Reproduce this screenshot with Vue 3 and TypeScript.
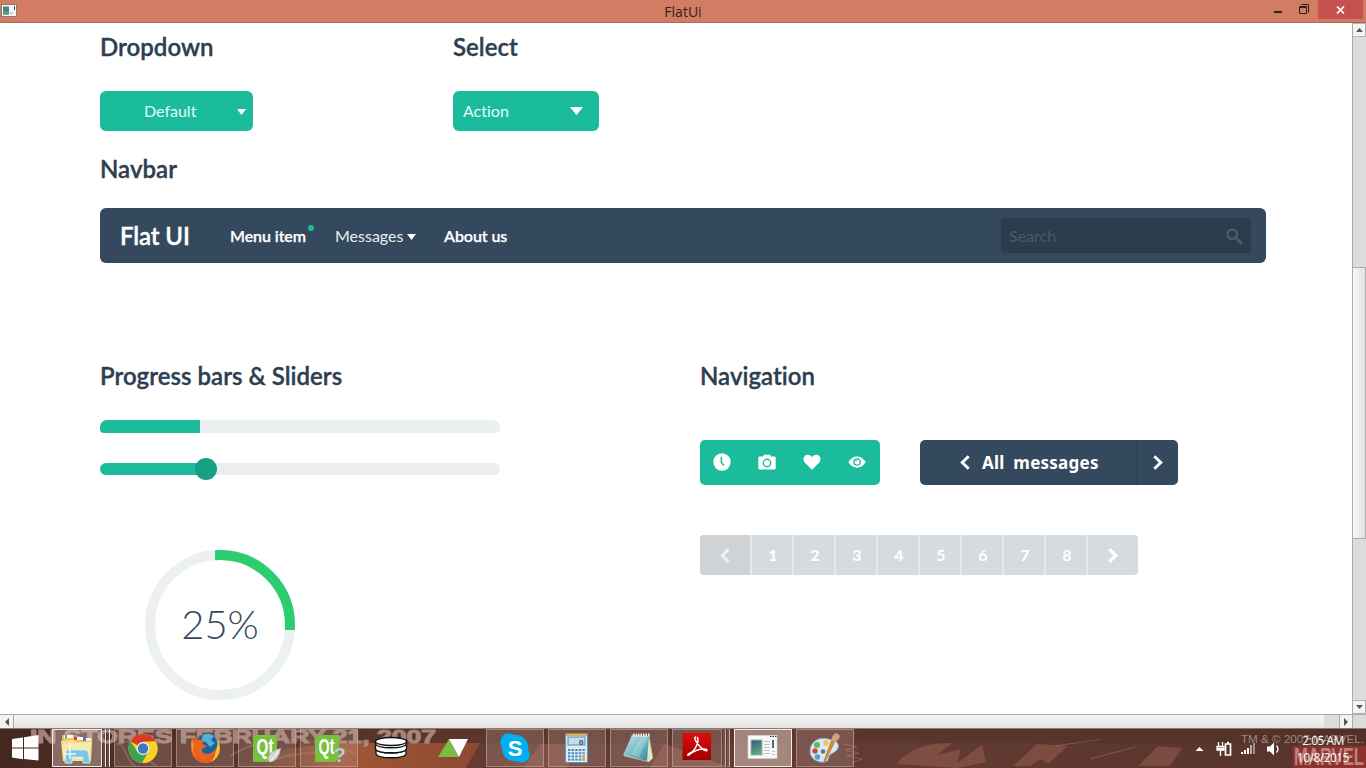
<script setup lang="ts">
import { ref } from 'vue'

const progress = ref<number>(25)
const slider = ref<number>(26.5)
const pages: number[] = [1, 2, 3, 4, 5, 6, 7, 8]
const search = ref<string>('')
const keyColumns: number[] = [0, 1, 2, 3, 4]
const keyRows: number[] = [0, 1, 2, 3]
</script>

<template>
  <div class="window">
    <header class="titlebar">
      <svg class="app-icon" width="16" height="14" viewBox="0 0 16 14">
        <rect x="0.5" y="0.5" width="15" height="12" fill="#f5f7f6" stroke="#8d7770" />
        <rect x="2" y="2.500" width="6" height="8" fill="#3f8790" />
        <path d="M2 10.500V6l6 2v2.500z" fill="#4fa06a" />
        <rect x="9" y="8" width="3" height="2" fill="#c4cbc8" />
        <rect x="13" y="2" width="1" height="4" fill="#274a7c" />
      </svg>
      <span class="title">FlatUi</span>
      <div class="controls">
        <svg class="glyph" width="60" height="19" viewBox="0 0 60 19">
          <rect x="16" y="11" width="8" height="2" fill="#2d2320" />
          <path d="M41.500 6.500h7v7h-7zM41 7.500h8M43.500 4.500h7v8" fill="none" stroke="#2d2320" />
        </svg>
        <button class="close">
          <svg width="9" height="8" viewBox="0 0 9 8"><path d="M1 .5l7 7M8 .5l-7 7" stroke="#fff" stroke-width="1.700" /></svg>
        </button>
      </div>
    </header>

    <div class="viewport">
      <main class="page">
        <section class="row fields">
          <div class="field">
            <h2>Dropdown</h2>
            <button class="dropdown">
              <span>Default</span>
              <svg width="9" height="6" viewBox="0 0 9 6"><path d="M0 0h9L4.500 6z" fill="#fff" /></svg>
            </button>
          </div>
          <div class="field">
            <h2>Select</h2>
            <button class="select">
              <span>Action</span>
              <svg width="13" height="8" viewBox="0 0 13 8"><path d="M.7 0h11.600q.7 0 .2.700L7 7.500q-.5.500-1 0L.5.700Q0 0 .7 0z" fill="#fff" /></svg>
            </button>
          </div>
        </section>

        <h2 class="navbar-heading">Navbar</h2>
        <nav class="navbar">
          <span class="brand">Flat UI</span>
          <a class="item strong menu-item">Menu item<i class="dot"></i></a>
          <a class="item messages">Messages
            <svg width="9" height="6" viewBox="0 0 9 6"><path d="M0 0h9L4.500 6z" fill="#fff" /></svg>
          </a>
          <a class="item strong">About us</a>
          <label class="search">
            <input v-model="search" placeholder="Search" />
            <svg width="17" height="17" viewBox="0 0 17 17"><circle cx="6.300" cy="6.300" r="4.800" fill="none" stroke="#4a5c6c" stroke-width="2.500" /><path d="M9.700 9.700L15 15" stroke="#4a5c6c" stroke-width="3" stroke-linecap="round" /></svg>
          </label>
        </nav>

        <section class="row lower">
          <div class="bars">
            <h2>Progress bars &amp; Sliders</h2>
            <div class="progress"><div class="fill" :style="{ width: progress + '%' }"></div></div>
            <div class="slider">
              <div class="fill" :style="{ width: slider + '%' }"></div>
              <i class="knob" :style="{ left: slider + '%' }"></i>
            </div>
            <div class="dial">
              <svg class="ring" width="150" height="150" viewBox="0 0 150 150">
                <clipPath id="quarter"><rect x="70" y="0" width="80" height="80" /></clipPath>
                <circle cx="75" cy="75" r="70" fill="none" stroke="#ecf0f1" stroke-width="10" />
                <circle cx="75" cy="75" r="70" fill="none" stroke="#2ecc71" stroke-width="10" clip-path="url(#quarter)" />
              </svg>
              <span>{{ progress }}%</span>
            </div>
          </div>

          <div class="navigation">
            <h2>Navigation</h2>
            <div class="row">
              <div class="toolbar">
                <button><svg width="18" height="18" viewBox="0 0 18 18"><circle cx="9" cy="9" r="8.700" fill="#fff" /><path d="M8.400 3.800v5.700l2.400 2.900" fill="none" stroke="#1abc9c" stroke-width="1.500" /></svg></button>
                <button><svg width="18" height="18" viewBox="0 0 18 18"><path d="M1.500 3.500h3.300L6 1.800h6l1.200 1.700h3.300q1.200 0 1.200 1.200v10.600q0 1.200-1.200 1.200h-15Q.3 16.500.3 15.300V4.700q0-1.200 1.200-1.200z" fill="#fff" /><circle cx="9" cy="10" r="3.700" fill="none" stroke="#1abc9c" stroke-width="1.400" /></svg></button>
                <button><svg width="18" height="18" viewBox="0 0 18 18"><path d="M9 16.700L1.700 9.400C.1 7.500 0 5 1.500 3.300 3.500 1.100 7 1.400 9 4.200c2-2.800 5.500-3.100 7.500-.9 1.500 1.700 1.400 4.200-.2 6.100z" fill="#fff" /></svg></button>
                <button><svg width="18" height="18" viewBox="0 0 18 18"><path d="M.3 9C4.500 1.500 13.500 1.500 17.700 9 13.500 16.500 4.500 16.500.3 9z" fill="#fff" /><circle cx="9" cy="9" r="3.200" fill="none" stroke="#1abc9c" stroke-width="1.300" /><path d="M7.500 9q0-1.500 1.500-1.500" fill="none" stroke="#1abc9c" stroke-width=".8" /></svg></button>
              </div>
              <div class="pager">
                <button class="all">
                  <svg width="10" height="15" viewBox="0 0 10 15"><path d="M8.700 1.200L2.200 7.500l6.500 6.300" fill="none" stroke="#fff" stroke-width="2.900" /></svg>
                  <span>All messages</span>
                </button>
                <button class="next"><svg width="10" height="15" viewBox="0 0 10 15"><path d="M1.300 1.200l6.500 6.300-6.500 6.300" fill="none" stroke="#fff" stroke-width="2.900" /></svg></button>
              </div>
            </div>
            <div class="pagination">
              <button class="edge prev"><svg width="10" height="15" viewBox="0 0 10 15"><path d="M8.700 1.200L2.200 7.500l6.500 6.300" fill="none" stroke="#eceff0" stroke-width="3.200" /></svg></button>
              <button v-for="n in pages" :key="n" class="number">{{ n }}</button>
              <button class="edge forward"><svg width="10" height="15" viewBox="0 0 10 15"><path d="M1.300 1.200l6.500 6.300-6.500 6.300" fill="none" stroke="#fff" stroke-width="3.200" /></svg></button>
            </div>
          </div>
        </section>
      </main>
      <aside class="vscroll">
        <div class="step"><svg width="7" height="4" viewBox="0 0 7 4"><path d="M0 4L3.500 0 7 4z" fill="#555" /></svg></div>
        <div class="track"><div class="vthumb"></div></div>
        <div class="step"><svg width="7" height="4" viewBox="0 0 7 4"><path d="M0 0h7L3.500 4z" fill="#555" /></svg></div>
      </aside>
    </div>

    <div class="hscroll">
      <div class="hstep"><svg width="4" height="8" viewBox="0 0 4 8"><path d="M4 0v8L0 4z" fill="#555" /></svg></div>
      <div class="hthumb"></div>
      <div class="hstep right"><svg width="4" height="8" viewBox="0 0 4 8"><path d="M0 0v8l4-4z" fill="#555" /></svg></div>
    </div>

    <footer class="taskbar">
      <svg class="wallpaper" width="1366" height="40" viewBox="0 0 1366 40">
        <defs>
          <linearGradient id="base" x2="1" y2="0">
            <stop offset="0" stop-color="#452821" /><stop offset=".18" stop-color="#5a342b" />
            <stop offset=".34" stop-color="#643a31" /><stop offset=".65" stop-color="#633b32" />
            <stop offset="1" stop-color="#57332b" />
          </linearGradient>
          <linearGradient id="skin" x2="1" y2="0">
            <stop offset="0" stop-color="#81452f" stop-opacity="0" /><stop offset=".45" stop-color="#9f5736" /><stop offset="1" stop-color="#8c4831" />
          </linearGradient>
        </defs>
        <rect width="1366" height="40" fill="url(#base)" />
        <path d="M225 40q60-25 130-25h125l-14 25z" fill="url(#skin)" />
        <path d="M116 15c12 3 8 16 20 24M125 13c14 3 18 17 31 25M230 28c38-24 83-18 125-3M270 33c24-9 49-10 73-5" fill="none" stroke="#b27a67" stroke-width="2" opacity=".4" />
        <path d="M540 16h40l-13 24h-44zM650 40l14-24 68 24zM896 36c20-22 41-20 57-21l-16 12 24-6-4 14 25-18 4 17-28 6zM1013 38l24-22 31 2-20 18-7-5-11 7zM1138 38l20-20 24 2-12 18z" fill="#a66859" opacity=".42" />
        <path d="M843 16l14 3-12 3 14 3-12 3 15 3-10 4M1055 18l47-7M1090 31l45-12" fill="none" stroke="#aa776a" opacity=".5" />
        <path d="M0 0h1366v15H855V0h-60v15H0z" fill="#392922" opacity=".22" />
        <text x="30" y="15" textLength="406" lengthAdjust="spacingAndGlyphs" class="poster">IN STORES FEBRUARY 21, 2007</text>
        <rect x="1293" y="18" width="73" height="22" fill="#8c322e" />
        <text x="1294" y="37" textLength="70" lengthAdjust="spacingAndGlyphs" class="marvel">MARVEL</text>
        <text x="1241" y="15" textLength="123" lengthAdjust="spacingAndGlyphs" class="legal">TM &amp; © 2007 MARVEL.</text>
        <rect width="1366" height="1" fill="#92776f" />
      </svg>
      <button class="start"><svg width="27" height="27" viewBox="0 0 27 27"><path d="M0 4l11-1.600V12.500H0zM12 2.200L26.500 0v12.500H12zM0 13.500h11v10.700L0 22.600zM12 13.500h14.500v12L12 24z" fill="#fff" /></svg></button>

      <div class="task boxed stacked bright">
        <svg width="50" height="38" viewBox="0 0 50 38">
          <path d="M10 9V6h11l1 3h16l2 2-2 20H11z" fill="#e9c363" />
          <path d="M12 6h9v3h-9zM22 8h9v3h-9zM31 9h8v3h-8z" fill="#fbfcf7" />
          <path d="M13 6h2v3h-2z" fill="#5eac42" /><path d="M22 8h3v3h-3z" fill="#d4482f" /><path d="M31 9h3v3h-3z" fill="#4085cb" />
          <path d="M9 12l12-1 3 2h16l-1 19H11z" fill="#f7df91" /><path d="M10 15l29-2-1 17H12z" fill="#fae9ab" />
          <path d="M14 23q0-2 2-2h17q2 0 3 2l2 11h-7v-6H20v6h-7z" fill="#79c5e4" stroke="#c0eafa" />
          <path d="M18 14v16M12 25h12" stroke="#fff" stroke-width="1.500" opacity=".8" />
        </svg>
        <i class="layer"></i><i class="layer second"></i>
      </div>
      <div class="task boxed">
        <svg width="58" height="38" viewBox="0 0 58 38">
          <circle cx="29" cy="19.500" r="14.500" fill="#f8cf27" />
          <path d="M29 19.500L16.400 12.200A14.500 14.500 0 0 1 41.600 12.200L29 13z" fill="#df3829" />
          <path d="M16.400 12.200A14.500 14.500 0 0 0 28 34l6.500-11.500L29 25l-6-3z" fill="#3ca350" />
          <path d="M29 12.700h12.900A14.500 14.500 0 0 1 28.200 34l6.400-11.500z" fill="#f9d129" />
          <circle cx="29" cy="19.500" r="6.500" fill="#f1f4ee" /><circle cx="29" cy="19.500" r="5.200" fill="#3e79bd" />
        </svg>
      </div>
      <div class="task boxed">
        <svg width="58" height="38" viewBox="0 0 58 38">
          <circle cx="29.500" cy="19.500" r="14.500" fill="#e2611f" />
          <path d="M35 6q9 4 9 14-1 9-9 13 5-6 5-13 0-8-5-14z" fill="#fbbf32" />
          <circle cx="31" cy="15" r="10.500" fill="#1d629f" /><path d="M27 6q6-3 11 1l-3 4 4 3-5 4-4-5-5-1z" fill="#4fb2d8" />
          <path d="M16 9l3 3q4-2 9-1l-2 4 5 2-5 3q-1 4 4 5 6 0 9-5 0 8-9 10-9 1-13-6-3-8-1-15z" fill="#e8641f" />
          <path d="M16 10q0 3 2 5-3 7 3 13-8-5-5-18z" fill="#f6952c" />
        </svg>
      </div>
      <div class="task boxed">
        <svg width="58" height="38" viewBox="0 0 58 38">
          <path d="M18 6h21v23l-4 4H15V9z" fill="#77c13d" />
          <text x="18.500" y="25" textLength="17" lengthAdjust="spacingAndGlyphs" class="qt">Qt</text>
          <path d="M43 19q-11 3-13 9-1 4 2 5 9-1 11-14z" fill="#d2d5d5" stroke="#8c9292" stroke-width=".5" /><path d="M41 21l-9 12" stroke="#fff" />
        </svg>
      </div>
      <div class="task boxed">
        <svg width="58" height="38" viewBox="0 0 58 38">
          <path d="M18 6h21v23l-4 4H15V9z" fill="#77c13d" />
          <text x="18.500" y="25" textLength="16" lengthAdjust="spacingAndGlyphs" class="qt">Qt</text>
          <text x="33.500" y="33" class="question">?</text>
        </svg>
      </div>
      <div class="task">
        <svg width="58" height="38" viewBox="0 0 58 38">
          <g fill="#fff" stroke="#111" stroke-width="1.300"><path d="M14 21v4c2 5 28 5 30 0v-4z" /><ellipse cx="29" cy="20" rx="15.500" ry="4" /><path d="M13.500 16v4c2 5 29 5 31 0v-4z" /><path d="M13.500 12v3c2 5 29 5 31 0v-3z" /><ellipse cx="29" cy="12.500" rx="15.500" ry="4" /></g>
        </svg>
      </div>
      <div class="task">
        <svg width="58" height="38" viewBox="0 0 58 38"><path d="M14 28l11-18 10 18z" fill="#78be43" /><path d="M25 10h19l-9 18z" fill="#fff" /></svg>
      </div>
      <div class="task boxed">
        <svg width="58" height="38" viewBox="0 0 58 38">
          <circle cx="22.500" cy="12.500" r="8.300" fill="#00aff0" /><circle cx="35.500" cy="25.500" r="8.300" fill="#00aff0" /><circle cx="29" cy="19" r="13.300" fill="#00aff0" />
          <text x="29" y="27" text-anchor="middle" class="skype">S</text>
        </svg>
      </div>
      <div class="task boxed">
        <svg width="58" height="38" viewBox="0 0 58 38">
          <rect x="17.500" y="4.500" width="22" height="29" rx="1" fill="#d8edf8" stroke="#5f93bb" />
          <rect x="18" y="5" width="21" height="2" fill="#eda94a" /><rect x="20" y="8" width="17" height="8" fill="#c6dce8" stroke="#668aa0" />
          <text x="31" y="15.500" class="zero">0</text>
          <g fill="#4f89b7"><template v-for="r in keyRows" :key="r"><rect v-for="c in keyColumns" :key="c" :x="20 + c * 3.600" :y="20 + r * 3.200" width="2.400" height="2" /></template></g>
          <rect x="34.500" y="26" width="2.500" height="5.500" fill="#eea736" />
        </svg>
      </div>
      <div class="task boxed">
        <svg width="58" height="38" viewBox="0 0 58 38">
          <defs><linearGradient id="note" x2="1" y2="1"><stop stop-color="#cbe9ec" /><stop offset=".55" stop-color="#70b7c2" /><stop offset="1" stop-color="#31889b" /></linearGradient></defs>
          <path d="M22 6l17 1 4 22-4 4-25-6z" fill="#e9e4c9" stroke="#9da691" stroke-width=".7" />
          <path d="M22 7l17 1-2 24-24-6z" fill="url(#note)" /><path d="M23 6h17" stroke="#edf4f2" stroke-width="3" stroke-dasharray="1.500 1" /><path d="M21 25l10-17h7L29 29z" fill="#fff" opacity=".22" />
        </svg>
      </div>
      <div class="task boxed stacked">
        <svg width="50" height="38" viewBox="0 0 50 38">
          <defs><linearGradient id="pdf" x2="0" y2="1"><stop stop-color="#e10b0b" /><stop offset="1" stop-color="#9e0000" /></linearGradient></defs>
          <rect x="10.500" y="4" width="28.500" height="27" fill="url(#pdf)" />
          <path d="M24 8c-4 0 3 10 8 13 4 2 4-1 0-1-5 0-10 2-14 5-3 3-3 0 0-1 5-2 10-12 7-16" fill="none" stroke="#fff" stroke-width="1.500" />
        </svg>
        <i class="layer"></i><i class="layer second"></i>
      </div>
      <div class="task boxed bright active">
        <svg width="58" height="38" viewBox="0 0 58 38">
          <defs><linearGradient id="screen" x2=".4" y2="1"><stop stop-color="#31578a" /><stop offset="1" stop-color="#58ac78" /></linearGradient></defs>
          <rect x="14" y="6.500" width="29" height="23" fill="#f8f9f8" stroke="#d2d5d3" stroke-width=".6" /><path d="M36 7.500h1.500m1 0H40m1 0h1.500" stroke="#283a50" />
          <rect x="17" y="11" width="11" height="15" fill="url(#screen)" stroke="#9eb1aa" />
          <path d="M30 12.500h6M30 15.500h6M30 18.500h6M30 21.500h6M30 24.500h6M38 22.500h3M38 25.500h3" stroke="#bac0bd" /><rect x="38" y="11" width="2" height="8" fill="#3f6c87" />
        </svg>
      </div>
      <div class="task boxed">
        <svg width="58" height="38" viewBox="0 0 58 38">
          <path d="M32 10c-9-3-18 3-18 12 0 7 6 12 15 11 5-1 2-5 6-8 4-2 9-5 7-10-1-3-5-4-10-5z" fill="#d6e9f4" stroke="#83a9c3" />
          <circle cx="21" cy="16" r="3" fill="#65b952" /><circle cx="19" cy="22" r="2.700" fill="#d74737" /><circle cx="21.500" cy="28" r="2.700" fill="#4aa2d8" /><circle cx="30" cy="14" r="2.700" fill="#f0c741" /><circle cx="27" cy="22.500" r="2.300" fill="#697582" />
          <path d="M39 12L29 33l-1-1 8-22z" fill="#de8c31" stroke="#ad6426" stroke-width=".6" /><path d="M35 11q1-4 4-7 3 0 5 3-1 4-5 6z" fill="#c8a67a" />
        </svg>
      </div>

      <div class="tray">
        <svg width="86" height="20" viewBox="0 0 86 20">
          <path d="M1.500 12L5.500 8l4 4z" fill="#fff" />
          <g stroke="#fff" fill="none"><path d="M24.500 3v4M28.500 3v4M23 7.500h7v3.500h-7zM23.500 9.500h6M26.500 11v6" stroke-width="1.300" /><path d="M31.500 5h5v11h-5zM33 3.500h2" stroke-width="1.700" /></g>
          <g fill="#fff"><rect x="47" y="13" width="2" height="2" /><rect x="50" y="11" width="2" height="4" /><rect x="53" y="9" width="2" height="6" /><rect x="56" y="6" width="2" height="9" opacity=".6" /><rect x="59" y="4" width="2" height="11" opacity=".45" /></g>
          <path d="M73 7.500h3l4-4v13l-4-4h-3z" fill="#fff" /><path d="M82.500 6.500q3 3.500 0 7" fill="none" stroke="#fff" stroke-width="1.300" />
        </svg>
        <div class="clock"><span>2:05 AM</span><span>10/8/2015</span></div>
      </div>
    </footer>
  </div>
</template>

<style>
body { margin: 0; overflow: hidden; }
</style>

<style scoped>
* { box-sizing: border-box; }
button { border: 0; padding: 0; background: none; font: inherit; color: inherit; }
svg { display: block; flex: none; }
.window { width: 1366px; height: 768px; display: flex; flex-direction: column; background: #fff; font-family: Lato, sans-serif; font-variant-ligatures: none; overflow: hidden; }
.titlebar { height: 23px; flex: none; display: grid; grid-template-columns: 1fr auto 1fr; background: #d27c63; border-bottom: 1px solid #a96a58; }
.app-icon { margin: 4px 0 0 1px; }
.title { font: 14px/23px "Open Sans", sans-serif; color: #30231f; }
.controls { display: flex; justify-content: flex-end; padding-right: 3px; }
.close { width: 45px; height: 19px; background: #c75050; display: grid; place-items: center; }
.viewport { height: 691px; display: flex; flex: none; }
.page { width: 1352px; padding: 9px 86px 0 100px; overflow: hidden; }
.row { display: flex; }
h2 { margin: 0; font-size: 24px; line-height: 30px; font-weight: 600; color: #2c3e50; white-space: nowrap; -webkit-text-stroke: .35px #2c3e50; letter-spacing: .03px; }
.fields .field { width: 353px; }
.dropdown, .select { margin-top: 29px; height: 40px; border-radius: 6px; background: #1abc9c; color: #e5fbf5; font-size: 16px; display: flex; align-items: center; justify-content: space-between; }
.dropdown span, .select span { padding-bottom: 2px; }
.dropdown { width: 153px; padding: 0 7px 0 44px; }
.dropdown svg { margin-top: 1px; }
.select { width: 146px; padding: 0 16px 0 10px; }
.navbar-heading { margin-top: 23px; }
.navbar { margin-top: 24px; width: 1166px; height: 55px; border-radius: 6px; background: #34495e; color: #fff; display: flex; align-items: center; padding: 0 15px 0 20px; }
.brand { width: 110px; font-size: 24px; font-weight: 600; -webkit-text-stroke: .35px #fff; letter-spacing: -.1px; }
.item { font-size: 16px; line-height: 20px; display: flex; align-items: center; white-space: nowrap; }
.strong { font-weight: 600; -webkit-text-stroke: .25px #fff; letter-spacing: -.08px; }
.messages { color: #e8edf0; width: 109px; gap: 4px; }
.messages svg { margin-top: 2px; }
.menu-item { width: 105px; position: relative; }
.dot { position: absolute; left: 78px; top: -1px; width: 6px; height: 6px; border-radius: 50%; background: #1abc9c; }
.search { margin-left: auto; width: 250px; height: 35px; border-radius: 4px; background: #2b3c4c; display: flex; align-items: center; padding: 0 8px; }
.search input { width: 217px; border: 0; padding: 0; background: none; font: 16px Lato, sans-serif; outline: 0; color: #fff; }
.search svg { margin-top: 1px; }
.search input::placeholder { color: #4a5c6c; opacity: 1; }
.lower { margin-top: 98px; }
.bars { width: 600px; }
.progress { margin-top: 29px; width: 400px; height: 13px; border-radius: 7px 7px 4px 4px; background: #ebeff0; overflow: hidden; }
.progress .fill { height: 100%; background: #1abc9c; }
.slider { position: relative; margin-top: 30px; width: 400px; height: 12px; border-radius: 6px; background: #ebedee; }
.slider .fill { height: 100%; border-radius: 6px 0 0 6px; background: #1abc9c; }
.knob { position: absolute; top: -5px; width: 22px; height: 22px; margin-left: -11px; border-radius: 50%; background: #16a085; }
.dial { margin: 75px 0 0 45px; width: 150px; height: 150px; display: grid; place-items: center; color: #34495e; font-size: 40px; font-weight: 300; }
.dial > * { grid-area: 1 / 1; }
.dial span { padding-bottom: 2px; }
.toolbar { margin-top: 49px; width: 180px; height: 45px; border-radius: 5px; background: #1abc9c; display: grid; grid-template-columns: repeat(4, 1fr); }
.toolbar button, .next, .edge { display: grid; place-items: center; }
.toolbar button { padding: 0 1px 1px 0; }
.pager { margin: 49px 0 0 40px; width: 258px; height: 45px; display: flex; border-radius: 5px; overflow: hidden; background: #34495e; color: #fff; }
.all { width: 218px; border-right: 2px solid #2f4256; display: flex; align-items: center; padding-left: 40px; gap: 12px; font: bold 17px/24px "Noto Sans", sans-serif; letter-spacing: .25px; word-spacing: 4px; white-space: nowrap; }
.all svg { margin-top: -1px; }
.next { width: 40px; padding-right: 1px; }
.pagination { margin-top: 50px; width: 438px; height: 40px; display: flex; border-radius: 4px; overflow: hidden; background: #d6dbdf; color: #fff; }
.number { width: 42px; border-left: 2px solid #e5e9eb; font-size: 16px; font-weight: 700; padding: 0 0 2px 2px; }
.edge { width: 50px; }
.prev { background: #cfd3d5; border-radius: 0 3px 3px 0; }
.forward { width: 52px; border-left: 2px solid #e5e9eb; }
.vscroll { width: 14px; border-left: 1px solid #aaa; background: #dcdcdc; display: flex; flex-direction: column; }
.step { height: 14px; background: #f3f3f3; border: 1px solid #b5b5b5; border-left: 0; display: grid; place-items: center; }
.track { flex: 1; padding-top: 230px; }
.vthumb { height: 272px; border: 1px solid #aaa; border-left: 0; background: linear-gradient(90deg, #f7f7f7, #e1e1e1); }
.hscroll { height: 14px; flex: none; display: flex; background: #dcdcdc; border-top: 1px solid #aaa; }
.hstep { width: 14px; border-right: 1px solid #aaa; background: #f2f2f2; display: grid; place-items: center; }
.hthumb { width: 1310px; background: linear-gradient(#f5f5f5, #e5e5e5); }
.right { margin-left: 15px; border-left: 1px solid #aaa; }
.taskbar { position: relative; height: 40px; display: flex; flex: none; gap: 4px; padding-top: 1px; isolation: isolate; }
.wallpaper { position: absolute; inset: 0; z-index: -1; }
.poster { font: bold 18px "Liberation Sans", sans-serif; fill: #b89890; stroke: #b89890; stroke-width: 1px; opacity: .8; }
.marvel { font: bold 24px "Liberation Sans", sans-serif; fill: #bd827a; }
.legal { font: 11px "Liberation Sans", sans-serif; fill: #a28780; }
.start { width: 48px; padding: 6px 0 0 12px; display: flex; align-items: flex-start; }
.task { width: 58px; height: 38px; flex: none; display: flex; }
.boxed { background: #c9aaa13d; box-shadow: inset 0 0 0 1px #c4aaa399; }
.stacked { background: none; box-shadow: none; gap: 1px; }
.stacked > svg { background: #c9aaa13d; box-shadow: inset 0 0 0 1px #c4aaa399; }
.layer { width: 3px; background: #c9aaa13d; border-right: 1px solid #c4aaa3; }
.bright > svg { background: #e6d0c966; box-shadow: inset 0 0 0 1px #f5eae6; }
.bright .layer { border-color: #f5eae6; }
.qt { font: bold 22px "Liberation Sans", sans-serif; fill: #fff; }
.question { font: bold 20px "Liberation Sans", sans-serif; fill: #ccd4da; stroke: #87939d; stroke-width: .5px; }
.skype { font: bold 22px "Liberation Sans", sans-serif; fill: #fff; }
.zero { font: bold 8px "Liberation Sans", sans-serif; fill: #34495c; }
.tray { margin-left: auto; width: 172px; display: flex; padding-top: 10px; }
.clock { margin: -7px 0 0 16px; width: 54px; display: flex; flex-direction: column; align-items: center; font: 12px/17px "Open Sans", sans-serif; letter-spacing: -.55px; color: #fff; white-space: nowrap; }
</style>
